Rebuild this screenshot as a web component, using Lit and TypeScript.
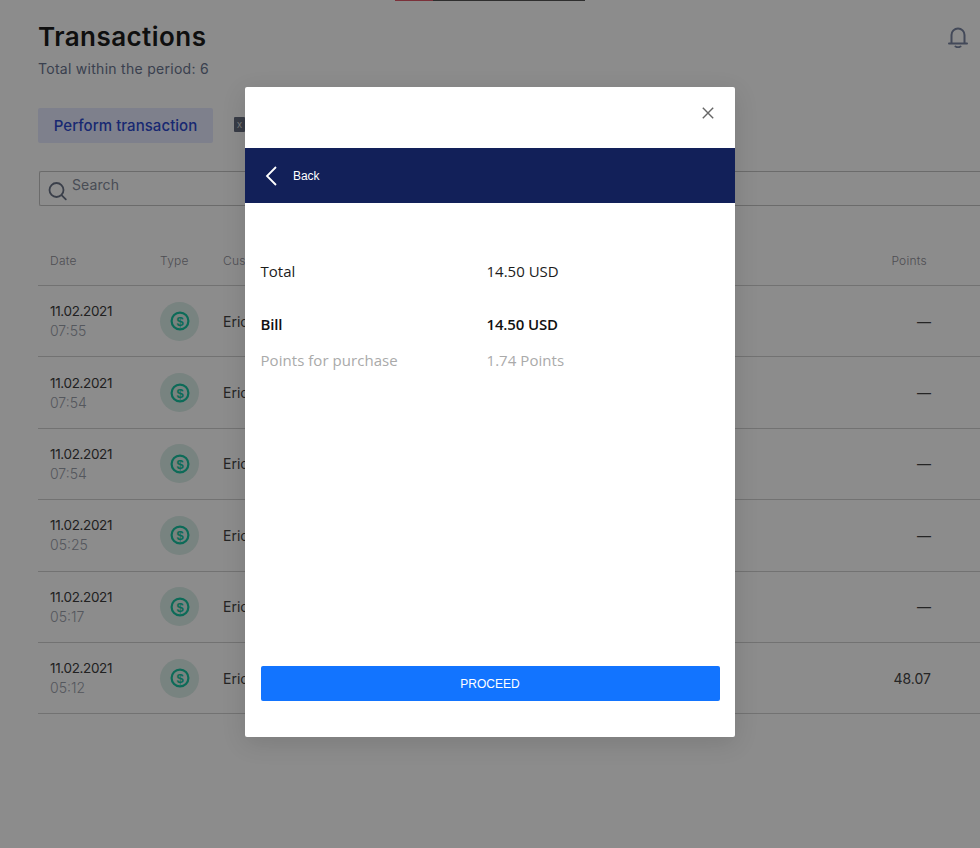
import { LitElement, html, css } from "lit";
import { customElement } from "lit/decorators.js";

const rows = [
  { d: "11.02.2021", t: "07:55", p: "—" },
  { d: "11.02.2021", t: "07:54", p: "—" },
  { d: "11.02.2021", t: "07:54", p: "—" },
  { d: "11.02.2021", t: "05:25", p: "—" },
  { d: "11.02.2021", t: "05:17", p: "—" },
  { d: "11.02.2021", t: "05:12", p: "48.07" },
];

@customElement("app-root")
export class AppRoot extends LitElement {
  static styles = css`
    :host { display: block; height: 848px; position: relative; overflow: hidden; background: #fff; font-family: Inter, "Liberation Sans", sans-serif; }
    .progress { display: flex; height: 1px; padding-left: 395px; }
    .progress i { display: block; height: 1px; }
    .p1 { width: 38px; background: #e0596a; }
    .p2 { width: 152px; background: #555; }
    .page { padding: 19px 0 0 38px; }
    .head { display: flex; justify-content: space-between; padding-right: 12px; }
    h1 { margin: 0; font-size: 26px; line-height: 34px; font-weight: 600; color: #1c1c1c; letter-spacing: .45px; }
    .sub { margin-top: 6px; font-size: 14px; line-height: 18px; color: #6a7590; letter-spacing: .28px; }
    .bell { margin-top: 6px; width: 20px; height: 22px; }
    .actions { display: flex; align-items: center; gap: 21px; margin-top: 30px; }
    .primary { width: 175px; height: 35px; border: 0; border-radius: 2px; background: #e6eaff; color: #2e4ad0; font: 500 15px Inter, sans-serif; letter-spacing: .05px; padding: 0; }
    .xl { width: 11px; height: 15px; margin-bottom: 2px; background: #666e80; color: #ddd; font: 10px/15px "Liberation Sans", sans-serif; text-align: center; border-radius: 1px; }
    .search { display: flex; margin: 28px 0 0 1px; height: 35px; box-sizing: border-box; border: 1px solid #c4c4c4; border-right: 0; border-radius: 2px 0 0 2px; padding: 6px 0 0 8px; gap: 5px; color: #858c9b; font-size: 14px; letter-spacing: .1px; }
    .search svg { width: 19px; height: 20px; margin-top: 3px; }
    .search span { line-height: 14px; }
    .thead, .row { display: grid; grid-template-columns: 110px 63px 1fr auto; align-items: center; padding: 0 49px 0 12px; border-bottom: 1px solid #cfcfcf; }
    .thead { margin-top: 33px; height: 47px; padding-bottom: 4px; font-size: 12px; font-weight: 300; color: #8f8f98; letter-spacing: .25px; padding-right: 53px; box-sizing: border-box; }
    .row { height: 71.4px; box-sizing: border-box; font-size: 14px; color: #444; }
    .date { color: #3c3c3c; line-height: 20px; font-size: 13.5px; letter-spacing: -.35px; }
    .time { color: #9a9eaa; font-size: 14px; line-height: 20px; font-weight: 300; }
    .ic { width: 39px; height: 39px; border-radius: 50%; background: #dbeee9; display: flex; align-items: center; justify-content: center; }
    .ic svg { width: 20px; height: 20px; }
    .overlay { position: absolute; inset: 0; background: rgba(0, 0, 0, .45); display: flex; justify-content: center; align-items: flex-start; padding-top: 87px; box-sizing: border-box; }
    .modal { width: 490px; height: 650px; background: #fff; border-radius: 2px; box-shadow: 0 6px 24px rgba(0, 0, 0, .12); display: flex; flex-direction: column; font-family: "Open Sans", sans-serif; }
    .top { height: 61px; display: flex; justify-content: flex-end; padding: 20px 21px 0 0; box-sizing: border-box; }
    .top svg { width: 12px; height: 12px; }
    .back { height: 55px; background: #122059; display: flex; align-items: center; padding-left: 20px; gap: 16px; color: #fff; font: 12px "Liberation Sans", sans-serif; letter-spacing: -.1px; }
    .back svg { width: 12px; height: 20px; }
    .body { flex: 1; padding: 57px 15.5px 0 15.5px; font-size: 15px; color: #1c1c1c; }
    .line { display: grid; grid-template-columns: 226px 1fr; line-height: 22px; }
    .bill { margin-top: 31px; font-weight: 600; color: #111; letter-spacing: -.15px; }
    .pts { margin-top: 14px; color: #aaa; letter-spacing: .05px; }
    .foot { padding: 0 15.5px 36px; }
    .proceed { display: block; width: 100%; height: 35px; border: 0; border-radius: 2px; background: #1274ff; color: #fff; font: 12px "Liberation Sans", sans-serif; padding: 0; }
  `;

  render() {
    return html`
      <div class="progress"><i class="p1"></i><i class="p2"></i></div>
      <div class="page">
        <div class="head">
          <div>
            <h1>Transactions</h1>
            <div class="sub">Total within the period: 6</div>
          </div>
          <svg class="bell" viewBox="0 0 20 22" fill="none" stroke="#7a85a2" stroke-width="2" stroke-linecap="round">
            <path d="M3.5 17V9a6.5 6.5 0 0 1 13 0v8" />
            <path d="M1 17.5h18" />
            <path d="M7.5 20.5c1.5 .9 3.5 .9 5 0" />
          </svg>
        </div>
        <div class="actions">
          <button class="primary">Perform transaction</button>
          <div class="xl">x</div>
        </div>
        <div class="search">
          <svg viewBox="0 0 19 20" fill="none" stroke="#6b7488" stroke-width="1.8" stroke-linecap="round">
            <circle cx="8.5" cy="9" r="7" />
            <path d="M13.8 14.3l4 4" />
          </svg>
          <span>Search</span>
        </div>
        <div class="thead"><span>Date</span><span>Type</span><span>Customer</span><span>Points</span></div>
        ${rows.map(
          (r) => html`<div class="row">
            <div>
              <div class="date">${r.d}</div>
              <div class="time">${r.t}</div>
            </div>
            <div class="ic">
              <svg viewBox="0 0 20 20" fill="none" stroke="#17c3a0" stroke-width="2.2">
                <circle cx="10" cy="10" r="8.4" />
                <text x="10" y="14.6" text-anchor="middle" font-size="13" font-weight="700" font-family="Liberation Sans" fill="#17c3a0" stroke="none">$</text>
              </svg>
            </div>
            <div>Eric</div>
            <div>${r.p}</div>
          </div>`
        )}
      </div>
      <div class="overlay">
        <div class="modal">
          <div class="top">
            <svg viewBox="0 0 12 12" stroke="#666" stroke-width="1.4" fill="none"><path d="M.8 .8l10.4 10.4M11.2 .8L.8 11.2" /></svg>
          </div>
          <div class="back">
            <svg viewBox="0 0 12 20" stroke="#fff" stroke-width="1.8" fill="none"><path d="M11 1L2 10l9 9" /></svg>
            <span>Back</span>
          </div>
          <div class="body">
            <div class="line"><span>Total</span><span>14.50 USD</span></div>
            <div class="line bill"><span>Bill</span><span>14.50 USD</span></div>
            <div class="line pts"><span>Points for purchase</span><span>1.74 Points</span></div>
          </div>
          <div class="foot"><button class="proceed">PROCEED</button></div>
        </div>
      </div>
    `;
  }
}
